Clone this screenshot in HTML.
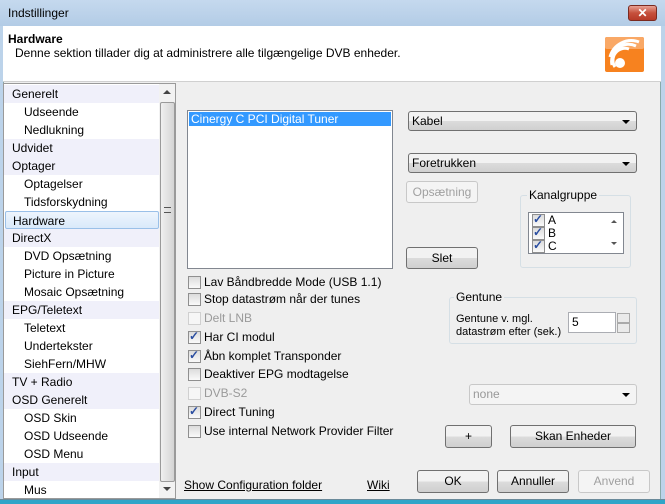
<!DOCTYPE html>
<html><head><meta charset="utf-8"><style>
*{box-sizing:border-box;margin:0;padding:0}
body{width:665px;height:504px;overflow:hidden;background:#bcd3ea;font-family:"Liberation Sans",sans-serif;font-size:11.5px;color:#000;position:relative}
.a{position:absolute}
.title{left:0;top:0;width:665px;height:26px;background:linear-gradient(#c5d9ee,#b3cce6);}
.client{left:3px;top:26px;width:658px;height:473px;background:#efefef;border-left:1px solid #8aa;border-right:1px solid #8aa}
.hdr{left:3px;top:26px;width:658px;height:56px;background:#fff;border-bottom:1px solid #d0d0d0}
.tree{left:3px;top:83px;width:173px;height:416px;background:#fff;border:1px solid #9a9a9a;overflow:hidden}
.row{position:absolute;left:0;width:155px;height:18px;line-height:18px;font-size:12px}
.top{background:#f0f0fa;padding-left:8px}
.sub{padding-left:20px}
.sel{border:1px solid #9ac0e8;background:linear-gradient(#eef5fd,#d9e9fa);border-radius:2px}
.sb{left:155px;top:0;width:17px;height:414px;background:#f2f2f2}
.btn{position:absolute;border:1px solid #707070;border-radius:3px;background:linear-gradient(#f2f2f2 50%,#dcdcdc 50%,#cfcfcf);text-align:center;font-size:12px}
.dis{border-color:#c8c8c8;background:#f4f4f4;color:#a0a0a0}
.cb{position:absolute;left:188px;font-size:12px;height:16px;line-height:14px;padding-left:16px}
.cb:before{content:"";position:absolute;left:0;top:1px;width:11px;height:11px;border:1px solid #8f8f8f;background:linear-gradient(#dcdcdc,#fafafa)}
.cb.c:after{content:"✓";position:absolute;left:1px;top:-1px;font-size:12px;color:#2a4da0;font-weight:bold}
.cb.d{color:#9a9a9a}.cb.d:before{border-color:#d0d0d0;background:#f6f6f6}
.combo{position:absolute;border:1px solid #707070;border-radius:3px;background:linear-gradient(#f2f2f2 50%,#dcdcdc 50%,#d0d0d0);font-size:12px;line-height:18px;padding-left:3px}
.combo:after{content:"";position:absolute;right:6px;top:8px;border:4px solid transparent;border-top:4px solid #000;border-bottom:0}
.grp{position:absolute;border:1px solid #d5dfe5;border-radius:3px}
.lg{position:absolute;background:#efefef;font-size:12px;padding:0 2px}
a{color:#000;text-decoration:underline;font-size:12px}
</style></head><body>
<div class="a title"></div>
<div class="a" style="left:8px;top:6px;font-size:12px">Indstillinger</div>
<div class="a" style="left:628px;top:5px;width:29px;height:16px;border-radius:3px;border:1px solid #7a2a20;background:linear-gradient(#e8a194,#c6503c 50%,#b73a28);color:#fff;text-align:center;font-weight:bold;font-size:12px;line-height:14px">✕</div>
<div class="a client"></div>
<div class="a hdr"></div>
<div class="a" style="left:8px;top:32px;font-weight:bold;font-size:12px">Hardware</div>
<div class="a" style="left:15px;top:46px;font-size:12px">Denne sektion tillader dig at administrere alle tilgængelige DVB enheder.</div>
<svg class="a" style="left:605px;top:37px" width="40" height="35" viewBox="0 0 40 35"><rect x="0" y="0" width="39" height="35" rx="2" fill="#f7821f"/><rect x="0" y="0" width="39" height="12" fill="#f9a866" rx="2"/><path d="M10 30 A12 12 0 0 1 24 12 M7 28 A17 17 0 0 1 31 9 M5 20 A22 22 0 0 1 34 5" stroke="#fff" stroke-width="3" fill="none"/><circle cx="15" cy="26" r="5" fill="#fff"/></svg>
<div class="a tree">
<div class="row top" style="top:1px">Generelt</div>
<div class="row sub" style="top:19px">Udseende</div>
<div class="row sub" style="top:37px">Nedlukning</div>
<div class="row top" style="top:55px">Udvidet</div>
<div class="row top" style="top:73px">Optager</div>
<div class="row sub" style="top:91px">Optagelser</div>
<div class="row sub" style="top:109px">Tidsforskydning</div>
<div class="row top sel" style="top:127px;left:1px;width:154px;padding-left:7px">Hardware</div>
<div class="row top" style="top:145px">DirectX</div>
<div class="row sub" style="top:163px">DVD Opsætning</div>
<div class="row sub" style="top:181px">Picture in Picture</div>
<div class="row sub" style="top:199px">Mosaic Opsætning</div>
<div class="row top" style="top:217px">EPG/Teletext</div>
<div class="row sub" style="top:235px">Teletext</div>
<div class="row sub" style="top:253px">Undertekster</div>
<div class="row sub" style="top:271px">SiehFern/MHW</div>
<div class="row top" style="top:289px">TV + Radio</div>
<div class="row top" style="top:307px">OSD Generelt</div>
<div class="row sub" style="top:325px">OSD Skin</div>
<div class="row sub" style="top:343px">OSD Udseende</div>
<div class="row sub" style="top:361px">OSD Menu</div>
<div class="row top" style="top:379px">Input</div>
<div class="row sub" style="top:397px">Mus</div>
<div class="a sb"><div class="a" style="left:4px;top:6px;border:4px solid transparent;border-bottom:4px solid #444;border-top:0"></div><div class="a" style="left:1px;top:18px;width:15px;height:380px;border:1px solid #9a9a9a;border-radius:2px;background:linear-gradient(90deg,#f0f0f0,#d4d4d4)"></div><div class="a" style="left:5px;top:123px;width:7px;height:6px;border-top:1px solid #555;border-bottom:1px solid #555"></div><div class="a" style="left:4px;top:403px;border:4px solid transparent;border-top:4px solid #444;border-bottom:0"></div></div>
</div>
<div class="a" style="left:187px;top:110px;width:206px;height:159px;background:#fff;border:1px solid #828790"><div style="margin:1px;background:#3399ff;color:#fff;height:14px;line-height:14px;padding-left:2px;font-size:12px">Cinergy C PCI Digital Tuner</div></div>
<div class="combo" style="left:408px;top:111px;width:229px;height:20px">Kabel</div>
<div class="combo" style="left:408px;top:153px;width:229px;height:20px">Foretrukken</div>
<div class="btn dis" style="left:406px;top:181px;width:72px;height:22px;line-height:20px">Opsætning</div>
<div class="btn" style="left:406px;top:247px;width:72px;height:22px;line-height:20px">Slet</div>
<div class="grp" style="left:520px;top:195px;width:111px;height:73px"></div>
<div class="lg" style="left:527px;top:188px">Kanalgruppe</div>
<div class="a" style="left:528px;top:212px;width:96px;height:42px;background:#fff;border:1px solid #828790"></div>
<div class="cb c" style="left:532px;top:213px;height:14px">A</div>
<div class="cb c" style="left:532px;top:226px;height:14px">B</div>
<div class="cb c" style="left:532px;top:239px;height:14px">C</div>
<div class="a" style="left:611px;top:220px;border:3px solid transparent;border-bottom:3px solid #555;border-top:0"></div>
<div class="a" style="left:611px;top:242px;border:3px solid transparent;border-top:3px solid #555;border-bottom:0"></div>
<div class="cb" style="top:275px">Lav Båndbredde Mode (USB 1.1)</div>
<div class="cb" style="top:292px">Stop datastrøm når der tunes</div>
<div class="cb d" style="top:311px">Delt LNB</div>
<div class="cb c" style="top:330px">Har CI modul</div>
<div class="cb c" style="top:349px">Åbn komplet Transponder</div>
<div class="cb" style="top:367px">Deaktiver EPG modtagelse</div>
<div class="cb d" style="top:386px">DVB-S2</div>
<div class="cb c" style="top:405px">Direct Tuning</div>
<div class="cb" style="top:424px">Use internal Network Provider Filter</div>
<div class="grp" style="left:449px;top:297px;width:188px;height:47px"></div>
<div class="lg" style="left:454px;top:290px">Gentune</div>
<div class="a" style="left:456px;top:313px;font-size:11px;line-height:13px">Gentune v. mgl.<br>datastrøm efter (sek.)</div>
<div class="a" style="left:568px;top:312px;width:48px;height:21px;background:#fff;border:1px solid #abadb3;font-size:12px;padding:2px 3px">5</div>
<div class="a" style="left:617px;top:313px;width:13px;height:10px;border:1px solid #aaa;background:#eaeaea"></div>
<div class="a" style="left:617px;top:323px;width:13px;height:10px;border:1px solid #aaa;background:#eaeaea"></div>
<div class="combo" style="left:469px;top:384px;width:168px;height:21px;border-color:#c8c8c8;background:#f4f4f4;color:#999"><span>none</span></div>
<div class="btn" style="left:445px;top:425px;width:47px;height:23px;line-height:21px">+</div>
<div class="btn" style="left:510px;top:425px;width:126px;height:23px;line-height:21px">Skan Enheder</div>
<a class="a" style="left:184px;top:478px">Show Configuration folder</a>
<a class="a" style="left:367px;top:478px">Wiki</a>
<div class="btn" style="left:417px;top:470px;width:72px;height:23px;line-height:21px">OK</div>
<div class="btn" style="left:497px;top:470px;width:72px;height:23px;line-height:21px">Annuller</div>
<div class="btn dis" style="left:578px;top:470px;width:72px;height:23px;line-height:21px">Anvend</div>
<div class="a" style="left:0;top:499px;width:665px;height:5px;background:#2fa5c8;border-top:1px solid #6a8a9a"></div>
</body></html>
